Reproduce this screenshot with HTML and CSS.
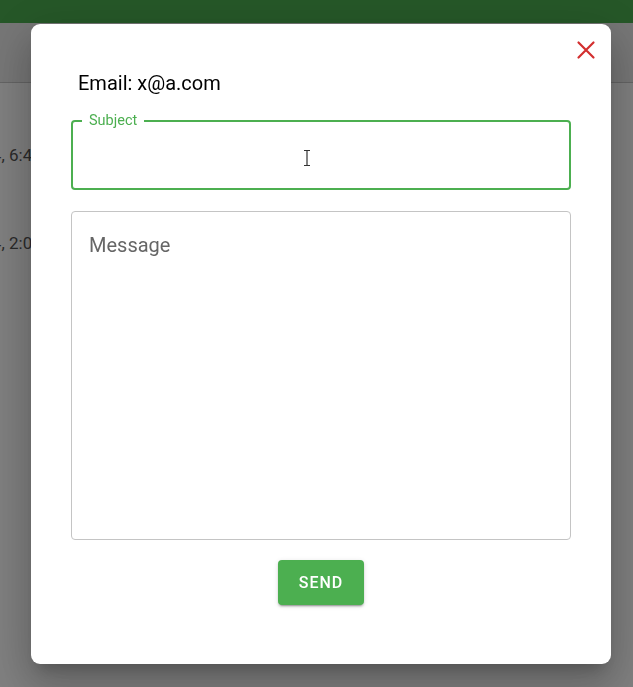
FILE: index.html
```html
<!DOCTYPE html>
<html lang="en">
<head>
<meta charset="utf-8">
<title>Send message</title>
<link rel="stylesheet" href="styles.css">
</head>
<body>
<div class="page">
  <header class="appbar"></header>
  <div class="subbar"></div>
  <ul class="rows">
    <li class="row"><span class="row-text">Mar 3, 2024, 6:45 PM</span></li>
    <li class="row"><span class="row-text">Mar 1, 2024, 2:05 PM</span></li>
  </ul>
</div>
<div class="backdrop">
  <div class="dialog" role="dialog">
    <button class="close" aria-label="Close">
      <svg width="20" height="20" viewBox="0 0 20 20"><path d="M2.5 2.5 L17.5 17.5 M17.5 2.5 L2.5 17.5" stroke="#d32f2f" stroke-width="2.2" stroke-linecap="round" fill="none"/></svg>
    </button>
    <p class="email">Email: x@a.com</p>
    <div class="field field-focused">
      <span class="field-label">Subject</span>
      <svg class="ibeam" width="8" height="18" viewBox="0 0 8 18"><path d="M1 1.5 H7 M4 1.5 V16.5 M1 16.5 H7" stroke="#333" stroke-width="1.2" fill="none"/></svg>
    </div>
    <div class="field field-message">
      <span class="placeholder">Message</span>
    </div>
    <div class="actions">
      <button class="send">SEND</button>
    </div>
  </div>
</div>
</body>
</html>
```

FILE: styles.css
```css
* { box-sizing: border-box; }
html, body { margin: 0; padding: 0; }
body {
  font-family: Roboto, "Liberation Sans", sans-serif;
  background: #fff;
  width: 633px;
  height: 687px;
  overflow: hidden;
}
.page { width: 633px; height: 687px; }
.appbar { height: 23px; background: #4caf50; }
.subbar {
  height: 60px;
  background: #ececec;
  border-bottom: 1px solid #c8c8c8;
}
.rows {
  list-style: none;
  margin: 0;
  padding: 28px 0 0;
}
.row {
  height: 88px;
  display: flex;
  align-items: center;
  font-size: 17px;
  color: #555;
  white-space: nowrap;
}
.row-text { margin-left: -88px; }

.backdrop {
  position: fixed;
  inset: 0;
  background: rgba(0, 0, 0, 0.5);
}
.dialog {
  position: absolute;
  left: 31px;
  top: 24px;
  width: 580px;
  height: 640px;
  background: #fff;
  border-radius: 9px;
  box-shadow: 0 11px 15px -7px rgba(0,0,0,0.2), 0 24px 38px 3px rgba(0,0,0,0.14), 0 9px 46px 8px rgba(0,0,0,0.12);
  padding: 0 40px;
  display: flex;
  flex-direction: column;
}
.close {
  position: absolute;
  right: 15px;
  top: 16px;
  width: 20px;
  height: 20px;
  padding: 0;
  border: 0;
  background: none;
  display: flex;
}
.email {
  margin: 47px 0 0 7px;
  font-size: 20px;
  line-height: 24px;
  color: #000;
}
.field {
  position: relative;
  width: 500px;
  border-radius: 4px;
}
.field-focused {
  margin-top: 25px;
  height: 70px;
  border: 2px solid #4caf50;
}
.field-label {
  position: absolute;
  left: 9px;
  top: -9px;
  padding: 0 7px 0 7px;
  background: #fff;
  color: #4caf50;
  font-size: 14.5px;
  line-height: 16px;
}
.ibeam {
  position: absolute;
  left: 230px;
  top: 27px;
}
.field-message {
  margin-top: 21px;
  height: 329px;
  border: 1px solid #c4c4c4;
  padding: 21px 17px;
}
.placeholder {
  font-size: 20px;
  line-height: 24px;
  color: #666;
}
.actions {
  margin-top: 20px;
  display: flex;
  justify-content: center;
}
.send {
  width: 86px;
  height: 45px;
  border: 0;
  border-radius: 4px;
  background: #4caf50;
  color: #fff;
  font-family: Roboto, "Liberation Sans", sans-serif;
  font-weight: 500;
  font-size: 16px;
  letter-spacing: 1px;
  box-shadow: 0 3px 1px -2px rgba(0,0,0,0.2), 0 2px 2px 0 rgba(0,0,0,0.14), 0 1px 5px 0 rgba(0,0,0,0.12);
}
```
